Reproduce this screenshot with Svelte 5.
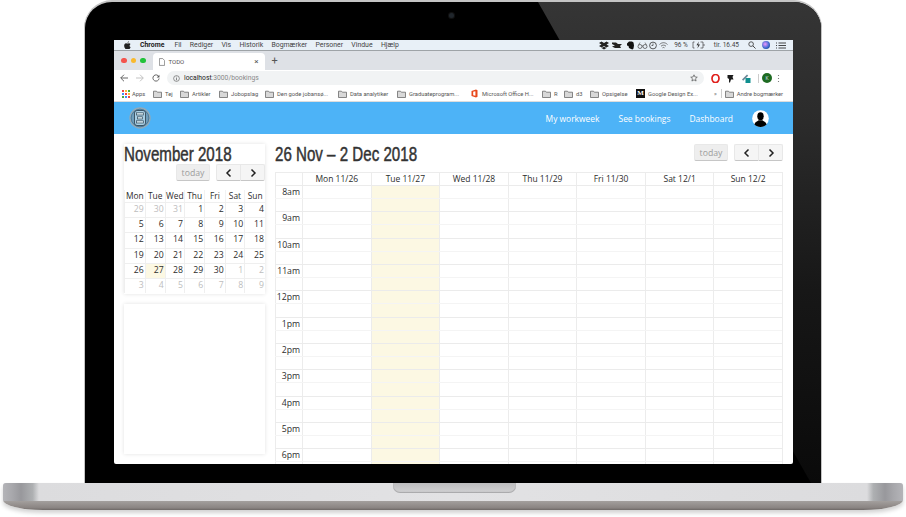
<script>
	const menus = ['Fil', 'Rediger', 'Vis', 'Historik', 'Bogmærker', 'Personer', 'Vindue', 'Hjælp']

	const bookmarks = [
		{label: 'Tej', w: 27},
		{label: 'Artikler', w: 39},
		{label: 'Jobopslag', w: 46},
		{label: 'Den gode jobansø...', w: 73},
		{label: 'Data analytiker', w: 59},
		{label: 'Graduateprogram...', w: 73},
		{label: 'Microsoft Office H...', w: 72, icon: 'office'},
		{label: 'R', w: 22},
		{label: 'd3', w: 26},
		{label: 'Opsigelse', w: 46},
		{label: 'Google Design Ex...', w: 78, icon: 'medium'}
	]

	const weekdays = ['Mon', 'Tue', 'Wed', 'Thu', 'Fri', 'Sat', 'Sun']

	// month grid, other = day outside november
	const weeks = [
		[29, 30, 31, 1, 2, 3, 4],
		[5, 6, 7, 8, 9, 10, 11],
		[12, 13, 14, 15, 16, 17, 18],
		[19, 20, 21, 22, 23, 24, 25],
		[26, 27, 28, 29, 30, 1, 2],
		[3, 4, 5, 6, 7, 8, 9]
	]
	const isOther = (w, d) => (w === 0 && d < 3) || (w === 4 && d > 4) || w === 5

	const days = ['Mon 11/26', 'Tue 11/27', 'Wed 11/28', 'Thu 11/29', 'Fri 11/30', 'Sat 12/1', 'Sun 12/2']
	const hours = ['8am', '9am', '10am', '11am', '12pm', '1pm', '2pm', '3pm', '4pm', '5pm', '6pm']
</script>

{#snippet folder()}
	<svg class="folder" viewBox="0 0 9 8" width="9" height="8">
		<path d="M.5 1.2h3l.8 1h4.2v5.3h-8z" fill="#d8d8d8" stroke="#6b6b6b" stroke-width=".8" />
	</svg>
{/snippet}

{#snippet arrows()}
	<div class="group">
		<button class="navbtn">
			<svg viewBox="0 0 8 10" width="8" height="10"><path d="M5.5 1.5 2 5l3.5 3.5" fill="none" stroke="#222" stroke-width="1.5" /></svg>
		</button>
		<button class="navbtn">
			<svg viewBox="0 0 8 10" width="8" height="10"><path d="M2.5 1.5 6 5 2.5 8.5" fill="none" stroke="#222" stroke-width="1.5" /></svg>
		</button>
	</div>
{/snippet}

<div class="laptop">
	<div class="lid">
		<div class="gloss"></div>
		<span class="camera"></span>
		<div class="screen">
			<div class="menubar">
				<svg class="apple" viewBox="0 0 10 12" width="7" height="8.5">
					<path d="M7 .2C6 .3 5 1.300 5.100 2.600 6.200 2.600 7.100 1.500 7 .2zM8.300 6.300c0-1.300 1-1.900 1.100-2C8.700 3.300 7.600 3.100 7.200 3.100c-.9-.1-1.700.5-2.200.5s-1.200-.5-1.900-.5C2.100 3.100 1.200 3.700.7 4.600c-1 1.700-.3 4.300.7 5.700.5.700 1 1.500 1.800 1.400.7 0 1-.5 1.800-.5s1.100.5 1.900.5 1.300-.7 1.700-1.400c.6-.8.800-1.600.8-1.600s-1.600-.6-1.600-2.400z" fill="#222" />
				</svg>
				<b class="appname">Chrome</b>
				{#each menus as m}
					<span class="menu">{m}</span>
				{/each}
				<div class="status">
					<svg viewBox="0 0 70 9" width="70" height="9">
						<path d="M1 2l2.500-1.500L6 2l2.500-1.500L11 2 8.500 3.500 11 5 8.500 6.500 6 5 3.500 6.500 1 5l2.500-1.500zM3.500 7L6 5.800 8.500 7 6 8.500z" fill="#222" />
						<path d="M14 1.500h4l2 1.500h4l-2 2 1 2h-6l-3-1.500 3-1-3-1.500z" fill="#222" />
						<path d="M29 2.500 31 .5h3l1.500 1 .5 3-.5 3-1 1-1.500-.5-2-1-.5-2-1.500-.5z" fill="#111" />
						<circle cx="42" cy="5.500" r="2" fill="none" stroke="#444" stroke-width=".7" /><circle cx="47" cy="5.500" r="2" fill="none" stroke="#444" stroke-width=".7" /><path d="M44 5h1M40.500 4 42 1.500M48.500 4 47 1.500" stroke="#444" stroke-width=".6" />
						<circle cx="55" cy="4.500" r="3.400" fill="none" stroke="#333" stroke-width=".8" /><path d="M55 2.500v2h-1.500" fill="none" stroke="#333" stroke-width=".7" />
						<path d="M61.500 3.500c2.500-2.400 5.500-2.400 8 0M63 5.200c1.600-1.400 3.400-1.400 5 0M64.500 6.800c.6-.5 1.400-.5 2 0" fill="none" stroke="#444" stroke-width=".7" />
					</svg>
					<span class="batt">96 %</span>
					<svg viewBox="0 0 13 8" width="13" height="8">
						<path d="M2.500 1H1v6h1.500M8.500 1H11v6H8.500M12 3v2" fill="none" stroke="#444" stroke-width=".7" />
						<path d="M6.800.6 4.500 4.300h1.700L5.400 7.500 8 3.500H6.200z" fill="#333" />
					</svg>
					<span class="clock">tir. 16.45</span>
					<svg viewBox="0 0 9 9" width="8" height="8"><circle cx="3.500" cy="3.500" r="2.600" fill="none" stroke="#444" /><path d="M5.500 5.500 8.500 8.500" stroke="#444" stroke-width="1.100" /></svg>
					<span class="siri"></span>
					<svg viewBox="0 0 10 7" width="10" height="7"><path d="M2.500 1H10M2.500 3.500H10M2.500 6H10M0 1h1M0 3.500h1M0 6h1" stroke="#333" stroke-width=".9" /></svg>
				</div>
			</div>

			<div class="tabstrip">
				<span class="light red"></span><span class="light yellow"></span><span class="light green"></span>
				<div class="tab">
					<svg viewBox="0 0 7 9" width="6" height="8"><path d="M.5.500h3.800l2.200 2.200v5.800h-6z" fill="#fff" stroke="#555" stroke-width=".7" /></svg>
					<span>TODO</span>
					<i>×</i>
				</div>
				<span class="newtab">+</span>
			</div>

			<div class="toolbar">
				<svg class="tool" viewBox="0 0 9 9" width="8" height="8"><path d="M4.500.8.800 4.500l3.700 3.700M1 4.500h8" fill="none" stroke="#555" stroke-width="1" /></svg>
				<svg class="tool" viewBox="0 0 9 9" width="8" height="8"><path d="M4.500.8l3.700 3.700-3.700 3.700M8 4.500H0" fill="none" stroke="#bbb" stroke-width="1" /></svg>
				<svg class="tool" viewBox="0 0 9 9" width="8" height="8"><path d="M7.700 3A3.500 3.500 0 1 0 8 5" fill="none" stroke="#555" stroke-width="1" /><path d="M8.300.8v3H5.300z" fill="#555" /></svg>
				<div class="omnibox">
					<svg viewBox="0 0 8 8" width="7" height="7"><circle cx="4" cy="4" r="3.300" fill="none" stroke="#555" stroke-width=".7" /><path d="M4 3.500v2.500M4 2v.8" stroke="#555" stroke-width=".8" /></svg>
					<span class="url"><b>localhost</b>:3000/bookings</span>
					<svg class="star" viewBox="0 0 10 10" width="8" height="8"><path d="M5 1l1.200 2.700 2.900.3-2.200 1.900.7 2.900L5 7.300 2.400 8.800l.7-2.900L.9 4l2.900-.3z" fill="none" stroke="#444" stroke-width=".8" /></svg>
				</div>
				<svg class="ext" viewBox="0 0 9 9" width="9" height="9"><ellipse cx="4.500" cy="4.500" rx="3.500" ry="4" fill="none" stroke="#e0201c" stroke-width="1.700" /></svg>
				<svg class="ext" viewBox="0 0 9 9" width="9" height="9"><path d="M1.500 1h6l-1 2 1 2.500H5L4 8.500H3L3 5 1.500 4z" fill="#1c1c1c" /></svg>
				<svg class="ext" viewBox="0 0 10 10" width="10" height="10"><path d="M1 6.500 6 1.500l1.200 1.200-5 5z" fill="#6a8796" /><rect x="4.500" y="5" width="5" height="5" fill="#0f8f8f" /></svg>
				<span class="divider"></span>
				<span class="profile">K</span>
				<svg class="dots" viewBox="0 0 3 9" width="3" height="9"><path d="M1.500 1v.8M1.500 4v.8M1.500 7v.8" stroke="#555" stroke-width="1.100" /></svg>
			</div>

			<div class="bookmarks">
				<svg class="appsicon" viewBox="0 0 8 8" width="8" height="8">
					<rect width="2" height="2" fill="#e44" /><rect x="3" width="2" height="2" fill="#fb3" /><rect x="6" width="2" height="2" fill="#4a4" />
					<rect y="3" width="2" height="2" fill="#48f" /><rect x="3" y="3" width="2" height="2" fill="#e44" /><rect x="6" y="3" width="2" height="2" fill="#fb3" />
					<rect y="6" width="2" height="2" fill="#4a4" /><rect x="3" y="6" width="2" height="2" fill="#48f" /><rect x="6" y="6" width="2" height="2" fill="#e44" />
				</svg>
				<span class="bm" style="width:21px">Apps</span>
				{#each bookmarks as b}
					<div class="bm" style="width:{b.w}px">
						{#if b.icon === 'office'}
							<svg class="folder" viewBox="0 0 9 9" width="9" height="9"><path d="M1.500 2 6 .5l1.500.7v6.600L6 8.500 1.500 7V2z" fill="#e8481c" /><path d="M3.200 2.800 5.400 2.200v4.600L3.200 6.200z" fill="#fff" /></svg>
						{:else if b.icon === 'medium'}
							<span class="medium">M</span>
						{:else}
							{@render folder()}
						{/if}
						<span>{b.label}</span>
					</div>
				{/each}
				<span class="more">»</span>
				<span class="bmdivider"></span>
				<div class="bm">
					{@render folder()}
					<span>Andre bogmærker</span>
				</div>
			</div>

			<nav class="nav">
				<div class="logo">
					<svg viewBox="0 0 22 22" width="22" height="22">
						<circle cx="11" cy="11" r="10" fill="#6f9dbb" stroke="#93a9b6" stroke-width="1.300" />
						<circle cx="11" cy="11" r="8.800" fill="none" stroke="#3f6b88" stroke-width=".7" />
						<rect x="5.500" y="3.500" width="11" height="15" rx="2.500" fill="#a9cfe4" stroke="#33495a" stroke-width=".9" />
						<rect x="7.500" y="5.800" width="7" height="2.200" fill="#dcebf2" stroke="#33495a" stroke-width=".7" />
						<rect x="8.500" y="9.800" width="5" height="2.200" fill="#dcebf2" stroke="#33495a" stroke-width=".7" />
						<rect x="7.500" y="13.800" width="7" height="2.200" fill="#dcebf2" stroke="#33495a" stroke-width=".7" />
					</svg>
				</div>
				<a href="#a">My workweek</a>
				<a href="#b">See bookings</a>
				<a href="#c">Dashboard</a>
				<svg class="avatar" viewBox="0 0 18 18" width="17" height="17">
					<circle cx="9" cy="9" r="8.800" fill="#fff" />
					<ellipse cx="9" cy="6.600" rx="3.400" ry="4.300" fill="#000" />
					<path d="M2.500 15.400c.6-2.800 3.500-3.500 4.500-4.500h4c1 1 3.900 1.700 4.500 4.500-1.700 1.600-3.900 2.500-6.500 2.500s-4.800-.9-6.500-2.500z" fill="#000" />
				</svg>
			</nav>

			<div class="content">
				<aside class="side">
					<div class="card mini">
						<h2>November 2018</h2>
						<div class="controls small">
							<button class="today">today</button>
							{@render arrows()}
						</div>
						<div class="month">
							{#each weekdays as d}
								<div class="wd">{d}</div>
							{/each}
							{#each weeks as week, w}
								{#each week as day, d}
									<div class="day" class:other={isOther(w, d)} class:now={w === 4 && d === 1}>{day}</div>
								{/each}
							{/each}
						</div>
					</div>
					<div class="card blank"></div>
				</aside>

				<section class="main">
					<div class="head">
						<h1>26 Nov – 2 Dec 2018</h1>
						<div class="controls">
							<button class="today">today</button>
							{@render arrows()}
						</div>
					</div>
					<div class="agenda">
						<div class="row header">
							<div class="axis"></div>
							{#each days as d}
								<div class="col">{d}</div>
							{/each}
						</div>
						{#each hours as h}
							<div class="row slot">
								<div class="axis">{h}</div>
								{#each days as d, i}
									<div class="col" class:now={i === 1}></div>
								{/each}
							</div>
							<div class="row slot minor">
								<div class="axis"></div>
								{#each days as d, i}
									<div class="col" class:now={i === 1}></div>
								{/each}
							</div>
						{/each}
					</div>
				</section>
			</div>
		</div>
	</div>

	<div class="base">
		<div class="notch"></div>
	</div>
</div>

<style>
	:global(body) {
		margin: 0;
		background: #fff;
		overflow: hidden;
	}

	.laptop {
		width: 906px;
		height: 517px;
		font-family: "Open Sans", sans-serif;
	}

	.lid {
		position: relative;
		box-sizing: border-box;
		width: 738px;
		height: 483px;
		margin-left: 84px;
		padding: 38px 29px 0 30px;
		background: #000;
		border: 1px solid #c4c4c4;
		border-top-width: 2px;
		border-bottom: 0;
		border-radius: 28px 28px 0 0;
		overflow: hidden;
	}

	/* diagonal sheen over the glass */
	.gloss {
		position: absolute;
		inset: 0;
		background: linear-gradient(180deg, #353535 0, #2b2b2b 25%, #171717 60%, #0a0a0a 100%);
		clip-path: polygon(453px 0, 100% 0, 100% 100%, 726px 100%);
	}

	.camera {
		position: absolute;
		left: 364px;
		top: 11px;
		width: 5px;
		height: 5px;
		border-radius: 50%;
		background: #20262c;
		box-shadow: 0 0 0 1px #111;
	}

	.screen {
		position: relative;
		width: 679px;
		height: 424px;
		margin-left: -1px;
		background: #fff;
		overflow: hidden;
		border-radius: 0 0 2px 2px;
	}

	.menubar {
		display: flex;
		align-items: center;
		height: 10px;
		padding-left: 10px;
		background: #e8f0f7;
		border-bottom: 1px solid #9ea3a7;
		font: 6.900px Roboto, sans-serif;
		color: #444;
	}

	.apple {
		margin-right: 1px;
	}

	.appname {
		margin: 0 10px 0 8px;
		color: #222;
	}

	.menu {
		margin-right: 8.300px;
	}

	.status {
		display: flex;
		align-items: center;
		margin-left: auto;
		gap: 4px;
		padding-right: 7px;
		font-size: 6.500px;
	}

	.batt {
		margin-left: 2px;
	}

	.clock {
		margin: 0 5px;
	}

	.siri {
		width: 8px;
		height: 8px;
		margin: 0 2px;
		border-radius: 50%;
		background: radial-gradient(circle at 40% 40%, #e9f, #36c 60%, #124);
	}

	.tabstrip {
		display: flex;
		align-items: flex-end;
		height: 19px;
		padding-left: 7px;
		background: #dee1e6;
	}

	.light {
		align-self: center;
		width: 5.500px;
		height: 5.500px;
		margin-right: 4px;
		border-radius: 50%;
	}

	.red { background: #f4544d; }
	.yellow { background: #f9b92c; }
	.green { background: #22c33b; }

	.tab {
		display: flex;
		align-items: center;
		gap: 4px;
		box-sizing: border-box;
		width: 112px;
		height: 17px;
		margin-left: 3px;
		padding: 0 6px;
		background: #fff;
		border-radius: 4px 4px 0 0;
		font: 6px Roboto, sans-serif;
		color: #555;
	}

	.tab i {
		margin-left: auto;
		font: 8px Roboto, sans-serif;
	}

	.newtab {
		align-self: center;
		margin-left: 7px;
		font: 11px Roboto, sans-serif;
		color: #555;
	}

	.toolbar {
		display: flex;
		align-items: center;
		height: 16px;
		padding-left: 6px;
		background: #fff;
	}

	.tool {
		margin-right: 8px;
	}

	.omnibox {
		display: flex;
		align-items: center;
		gap: 4px;
		box-sizing: border-box;
		width: 537px;
		height: 14px;
		margin-left: -1px;
		padding: 0 6px 0 6px;
		background: #f1f3f4;
		border-radius: 7px;
	}

	.url {
		font: 6.750px Roboto, sans-serif;
		color: #888;
	}

	.url b {
		font-weight: 400;
		color: #222;
	}

	.star {
		margin-left: auto;
	}

	.ext {
		margin-left: 7px;
	}

	.ext + .ext {
		margin-left: 6px;
	}

	.divider {
		width: 1px;
		height: 9px;
		margin: 0 3px 0 7px;
		background: #ccc;
	}

	.profile {
		display: flex;
		align-items: center;
		justify-content: center;
		width: 10px;
		height: 10px;
		border-radius: 50%;
		background: #1e6b22;
		color: #cde;
		font: 5px Roboto, sans-serif;
	}

	.dots {
		margin-left: 5px;
	}

	.bookmarks {
		display: flex;
		align-items: center;
		height: 15px;
		padding-left: 8px;
		background: #fff;
		border-bottom: 1px solid #ddd;
		font: 5.800px Roboto, sans-serif;
		color: #555;
		white-space: nowrap;
	}

	.appsicon {
		margin-right: 2px;
	}

	.bm {
		display: flex;
		align-items: center;
		gap: 3px;
		flex: none;
	}

	.folder {
		flex: none;
	}

	.medium {
		display: inline-block;
		width: 9px;
		height: 9px;
		background: #111;
		color: #fff;
		font: 700 7px/9px "Liberation Serif", serif;
		text-align: center;
	}

	.bmdivider {
		width: 1px;
		height: 9px;
		margin: 0 3px 0 4px;
		background: #ccc;
	}

	.nav {
		display: flex;
		align-items: center;
		height: 32px;
		padding: 0 24px 0 15px;
		background: #4db3f7;
	}

	.logo {
		display: flex;
		margin-right: auto;
	}

	.nav a {
		margin-right: 19px;
		font-size: 8.450px;
		color: #fff;
		text-decoration: none;
	}

	.content {
		display: flex;
		gap: 10px;
		padding: 10px 10px 0;
	}

	.side {
		display: flex;
		flex-direction: column;
		gap: 10px;
		width: 141px;
		flex: none;
	}

	.card {
		background: #fff;
		box-shadow: 0 0 4px rgba(0, 0, 0, 0.12);
	}

	.mini,
	.blank {
		height: 150px;
	}

	/* the original heading face is condensed, no such family here */
	h1, h2 {
		margin: 0;
		font: 400 21px/20px "Liberation Sans", sans-serif;
		-webkit-text-stroke: 0.5px #333;
		color: #333;
		white-space: nowrap;
		transform: scaleX(0.72);
		transform-origin: left;
	}

	.controls {
		display: flex;
		justify-content: flex-end;
		gap: 6px;
	}

	.small {
		height: 26px;
	}

	button {
		box-sizing: border-box;
		height: 17px;
		padding: 0;
		border: 1px solid #e8e8e8;
		border-bottom-color: #c6c6c6;
		background: #f5f5f5;
		font: 8.700px "Open Sans", sans-serif;
		color: #9c9c9c;
	}

	.today {
		width: 34px;
		border-radius: 2px;
		background: #eee;
	}

	.group {
		display: flex;
	}

	.navbtn {
		display: flex;
		align-items: center;
		justify-content: center;
		width: 25px;
		border-radius: 0 2px 2px 0;
	}

	.navbtn:first-child {
		width: 24px;
		border-right: 0;
		border-radius: 2px 0 0 2px;
	}

	.month {
		display: grid;
		grid-template-columns: 20.700px 20px 19.300px 20.300px 20.400px 19.600px 20.700px;
		grid-template-rows: 12px repeat(6, 15.200px);
		font-size: 8.700px;
		color: #2d2d2d;
	}

	.wd {
		line-height: 12px;
		text-align: center;
		font-size: 8.400px;
		border-left: 1px solid #f2f2f2;
	}

	.day {
		padding-right: 1px;
		line-height: 13.500px;
		text-align: right;
		border: solid #efefef;
		border-width: 1px 0 0 1px;
	}

	.month .other {
		color: #bdbdbd;
	}

	.now {
		background: #fcf8e3;
	}

	.main {
		width: 508px;
		flex: none;
	}

	.head {
		display: flex;
		justify-content: space-between;
		align-items: flex-start;
		height: 28px;
	}

	.agenda {
		border: solid #ececec;
		border-width: 1px 1px 0 0;
		font-size: 8.700px;
		color: #2d2d2d;
	}

	.row {
		display: grid;
		grid-template-columns: 27px repeat(7, 1fr);
	}

	.header {
		height: 12px;
		line-height: 12px;
		font-size: 8.500px;
		text-align: center;
	}

	.header > div,
	.slot > div {
		border-left: 1px solid #ececec;
	}

	.slot {
		height: 13.170px;
		box-sizing: border-box;
		border-top: 1px solid #ebebeb;
	}

	.minor {
		border-top-color: #f4f4f4;
	}

	.slot .axis {
		padding-right: 2px;
		line-height: 12px;
		text-align: right;
		white-space: nowrap;
	}

	.base {
		position: relative;
		width: 900px;
		height: 27px;
		margin-left: 3px;
		background: linear-gradient(180deg, #e2e2e4 0, #dcdcde 64%, #a39f9d 67%, #8a8482 92%, #6d6866 100%);
		border-radius: 3px 3px 40px 40px / 3px 3px 10px 10px;
		box-shadow: 0 3px 4px rgba(0, 0, 0, 0.18);
		overflow: hidden;
	}

	.base::before {
		content: "";
		position: absolute;
		inset: 0 0 9px;
		background: linear-gradient(90deg, #b4b4b8 0, #a8a8ac 1%, #98989c 2%, #aeb0b2 3.300%, #dcdcde 4%, #e2e2e4 50%, #dcdcde 96%, #aeb0b2 96.700%, #98989c 98%, #a8a8ac 99%, #b4b4b8 100%);
	}

	.notch {
		position: absolute;
		left: 390px;
		top: 0;
		width: 123px;
		height: 10px;
		background: linear-gradient(180deg, #bcbcbe, #d2d2d4);
		border-radius: 0 0 7px 7px;
		box-shadow: inset 0 -1px 1px rgba(0, 0, 0, 0.2);
	}
</style>
